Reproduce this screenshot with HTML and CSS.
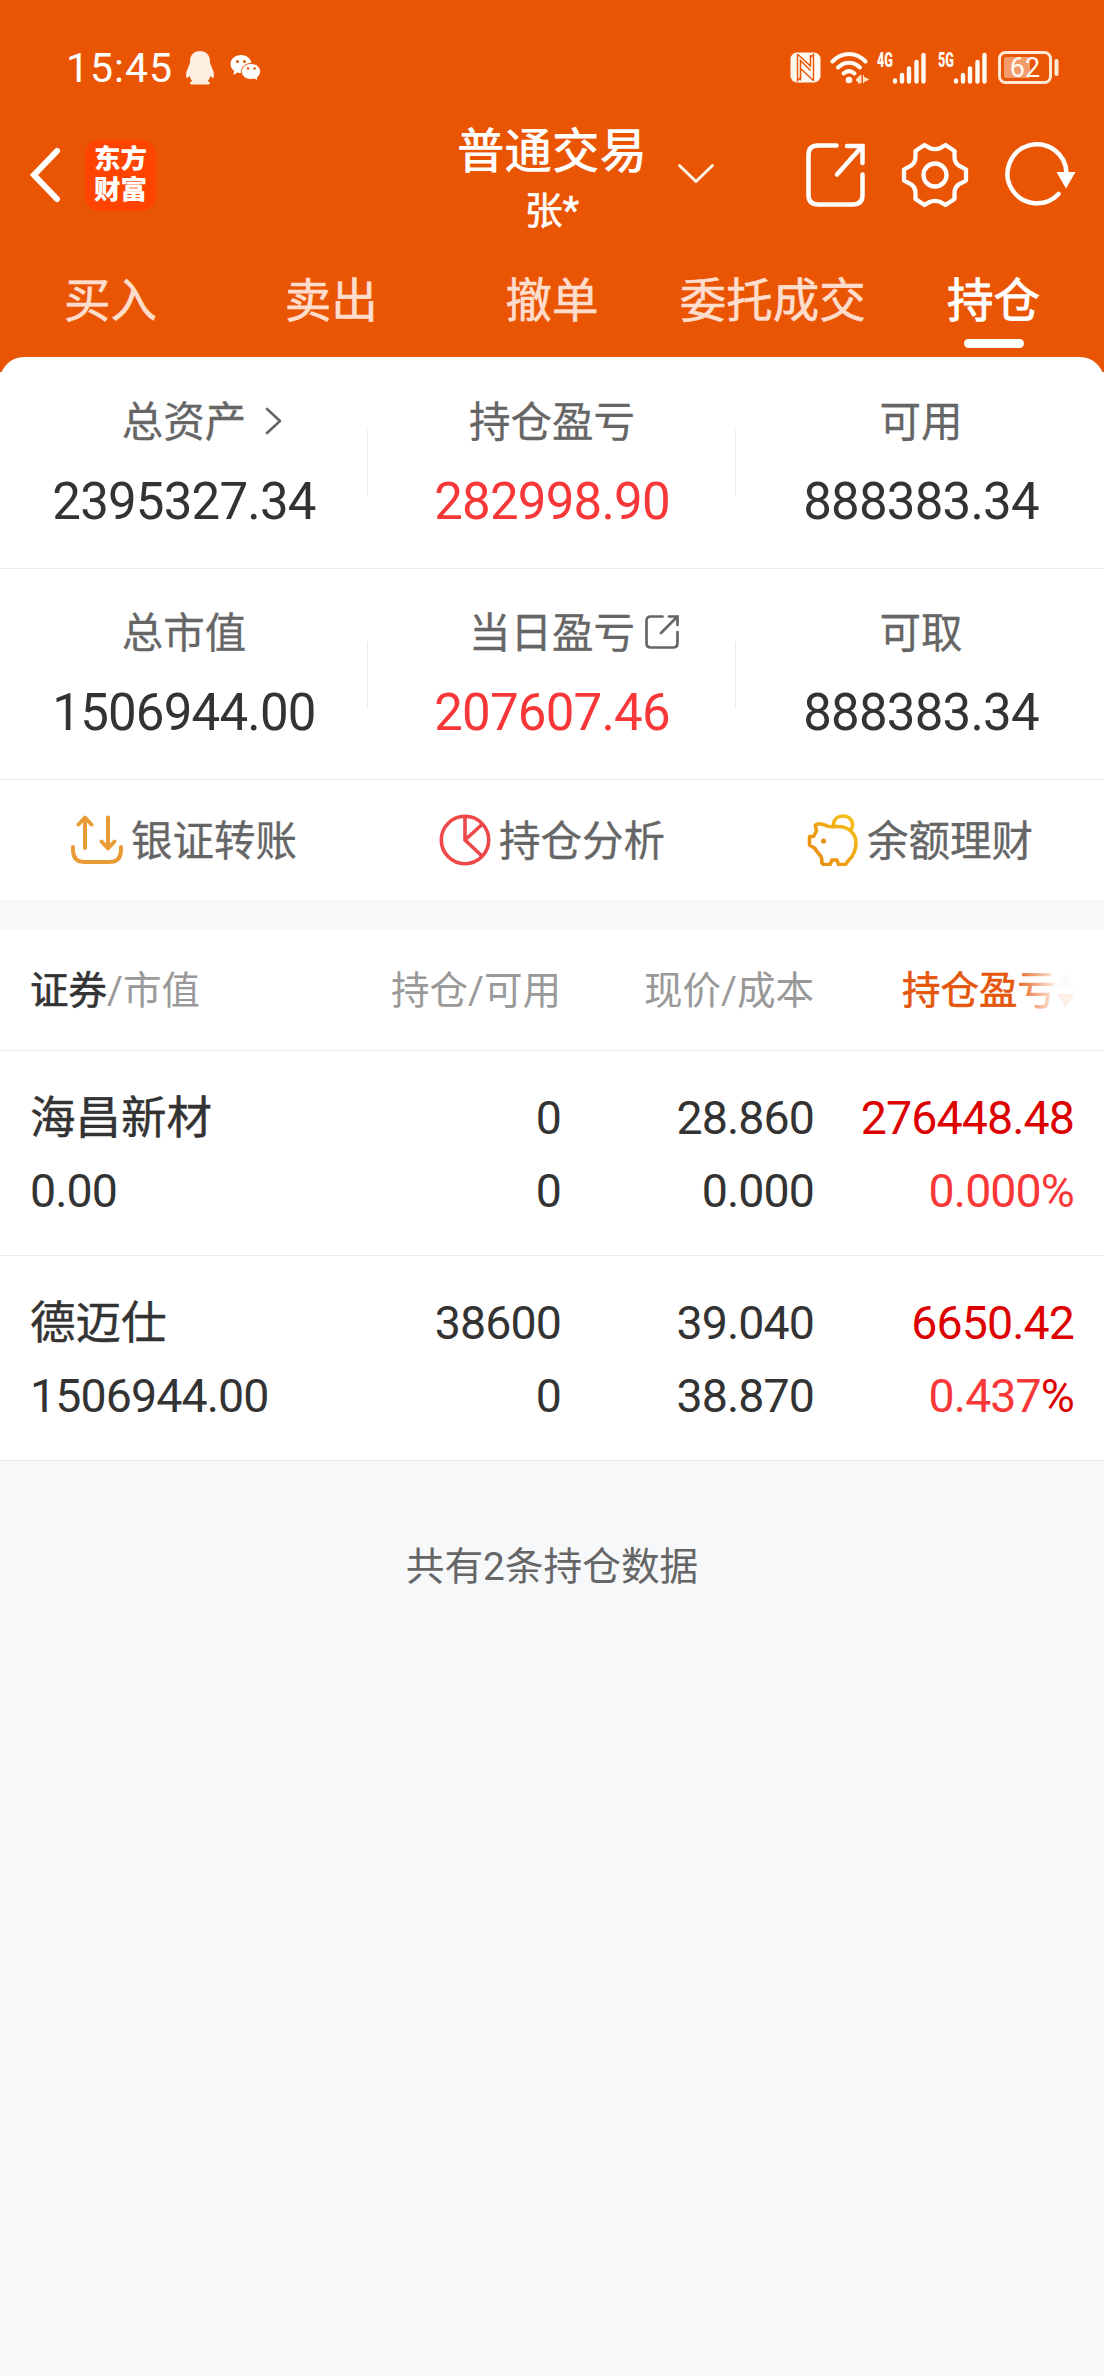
FILE: index.html
```html
<!DOCTYPE html>
<html lang="zh-CN">
<head>
  <meta charset="UTF-8">
  <meta name="viewport" content="width=device-width, initial-scale=1.0">
  <title>持仓 - 普通交易</title>
  <link rel="stylesheet" href="styles.css">
</head>
<body>
  <header class="header">
    <!-- 状态栏 -->
    <div class="status-bar">
      <span class="time">15:45</span>
      <svg class="icon-qq" width="30" height="34" viewBox="0 0 30 34">
        <path d="M15 0C8.500 0 5 4.500 5 10.500C5 14 1 19 1 24C1 28 3 27.500 4.500 24.500C5 27 6 28.800 7.500 30C4.500 31 4 33.500 7 33.500H23C26 33.500 25.500 31 22.500 30C24 28.800 25 27 25.500 24.500C27 27.500 29 28 29 24C29 19 25 14 25 10.500C25 4.500 21.500 0 15 0Z" fill="#fdeee2"/>
      </svg>
      <svg class="icon-wechat" width="31" height="28" viewBox="0 0 31 28">
        <path d="M11 1C5 1 .5 5 .5 10C.5 13 2 15.300 4.200 17L3.300 21L7.500 18.500C8.700 18.900 10 19 11 19C17 19 21.500 15 21.500 10S17 1 11 1Z" fill="#fff"/>
        <path d="M21 9.500C15.500 9.500 11.500 13 11.500 17.500S15.500 25.500 21 25.500C22.200 25.500 23.200 25.300 24.300 25L28 27L27.200 23.600C29.200 22.200 30.500 20 30.500 17.500C30.500 13 26.500 9.500 21 9.500Z" fill="#fff" stroke="#ea5504"/>
        <g fill="#ea5504"><circle cx="7.500" cy="7.500" r="1.500"/><circle cx="14.500" cy="7.500" r="1.500"/><circle cx="18" cy="14.500" r="1.300"/><circle cx="24.500" cy="14.500" r="1.300"/></g>
      </svg>
      <div class="status-right">
        <svg width="31" height="31" viewBox="0 0 31 31">
          <rect x=".5" y=".5" width="30" height="30" rx="6.500" fill="#fffaf3"/>
          <path d="M7.500 2V28.500L11 25M23.500 29V2.500L20 6" fill="none" stroke="#ea5504" stroke-width="1.400"/>
          <path d="M8 2.500L20.500 14V3M10.500 28.500V8.500L20.500 18.500M10.500 16.500L23.500 28.500" fill="none" stroke="#ea5504" stroke-width="1.500"/>
        </svg>
        <svg class="icon-wifi" width="40" height="32" viewBox="0 0 40 32">
          <g fill="none" stroke="#fffaf3" stroke-width="4" stroke-linecap="round">
            <path d="M2.500 9.500C12 -.500 26 -.500 35.500 9.500"/>
            <path d="M8 15.500C14.500 9 23.500 9 30 15.500"/>
            <path d="M13.500 21.500C17 18.500 21 18.500 24.500 21.500"/>
          </g>
          <circle cx="19" cy="28" r="3.300" fill="#fffaf3"/>
          <path d="M31 23V31H28.500V29H26.500V27ZM33.500 23V31M33.500 25L38.500 27.500L34.500 29.500Z" fill="#ffe3c8" stroke="#ffe3c8"/>
        </svg>
        <svg class="icon-signal" width="50" height="38" viewBox="0 -3 50 38">
          <text class="net-text" x="1" y="14.500" textLength="16" lengthAdjust="spacingAndGlyphs">4G</text>
          <path d="M19 28.500V29.500M26 23V29.500M33 16.500V29.500M40.500 10V29.500M47.500 3V29.500" stroke="#fffaf3" stroke-width="4.400" stroke-linecap="round"/>
        </svg>
        <svg class="icon-signal" width="50" height="38" viewBox="0 -3 50 38">
          <text class="net-text" x="1" y="14.500" textLength="16" lengthAdjust="spacingAndGlyphs">5G</text>
          <path d="M19 28.500V29.500M26 23V29.500M33 16.500V29.500M40.500 10V29.500M47.500 3V29.500" stroke="#fffaf3" stroke-width="4.400" stroke-linecap="round"/>
        </svg>
        <svg width="61" height="33" viewBox="0 0 61 33">
          <rect x="1.500" y="1.500" width="51" height="30" rx="6" fill="none" stroke="#ffe9d6" stroke-width="3"/>
          <rect x="6" y="6" width="26" height="21" rx="2" fill="#f49b6b"/>
          <path d="M58.500 10V23" stroke="#ffe9d6" stroke-width="4" stroke-linecap="round"/>
          <text class="battery-text" x="27" y="26.300">62</text>
        </svg>
      </div>
    </div>

    <!-- 标题栏 -->
    <div class="nav-bar">
      <div class="nav-left">
        <svg width="32" height="56" viewBox="0 0 32 56">
          <path d="M28 4L5 28L28 52" fill="none" stroke="#fff" stroke-width="6" stroke-linecap="round" stroke-linejoin="miter"/>
        </svg>
        <div class="logo"><span>东方</span><span>财富</span></div>
      </div>
      <div class="nav-title">
        <div class="title">普通交易</div>
        <div class="user">张*</div>
      </div>
      <svg class="title-arrow" width="38" height="22" viewBox="0 0 38 22">
        <path d="M2.500 2.500L19 18.500L35.500 2.500" fill="none" stroke="#fff6ea" stroke-width="3" stroke-linecap="round" stroke-linejoin="round"/>
      </svg>
      <div class="nav-right">
        <svg width="60" height="66" viewBox="0 0 60 66">
          <path d="M30.500 3.500H12Q2.500 3.500 2.500 13V53Q2.500 62.500 12 62.500H47Q56.500 62.500 56.500 53V32.500M41 4H56.500V21M56 4.500L31 32.500" fill="none" stroke="#fff" stroke-width="4.500" stroke-linecap="round"/>
        </svg>
        <svg width="68" height="66" viewBox="0 0 68 66">
          <path d="M23.500 3L28 5.700Q34 8.500 40 5.700L44.500 3L53.500 9V13.500C53 19 56 23.500 61.500 25.500L65 27.500V38.500L61.500 40.500C56 42.500 53 47 53.500 52.500V57L44.500 63L40 60.300Q34 57.500 28 60.300L23.500 63L14.500 57V52.500C15 47 12 42.500 6.500 40.500L3 38.500V27.500L6.500 25.500C12 23.500 15 19 14.500 13.500V9Z" fill="none" stroke="#fff" stroke-width="4.300" stroke-linejoin="round"/>
          <circle cx="34" cy="33" r="11.500" fill="none" stroke="#fff" stroke-width="4.300"/>
        </svg>
        <svg width="72" height="66" viewBox="0 0 72 66">
          <path d="M54.500 52A29.500 29.500 0 1 1 62.500 31.500" fill="none" stroke="#fff" stroke-width="4.500" stroke-linecap="round"/>
          <path d="M52.500 30H71.500L62 46.500Z" fill="#fff"/>
        </svg>
      </div>
    </div>

    <!-- 交易标签 -->
    <nav class="tabs">
      <a class="tab">买入</a>
      <a class="tab">卖出</a>
      <a class="tab">撤单</a>
      <a class="tab">委托成交</a>
      <a class="tab active">持仓</a>
    </nav>
  </header>

  <!-- 资产概览 -->
  <section class="summary">
    <div class="summary-row">
      <div class="cell">
        <div class="label">总资产
          <svg class="label-arrow" width="17" height="28" viewBox="0 0 17 28">
            <path d="M2 2L15 14L2 26" fill="none" stroke="#666" stroke-width="2.600" stroke-linecap="round" stroke-linejoin="round"/>
          </svg>
        </div>
        <div class="value">2395327.34</div>
      </div>
      <div class="cell">
        <div class="label">持仓盈亏</div>
        <div class="value up">282998.90</div>
      </div>
      <div class="cell">
        <div class="label">可用</div>
        <div class="value">888383.34</div>
      </div>
    </div>
    <div class="summary-row">
      <div class="cell">
        <div class="label">总市值</div>
        <div class="value">1506944.00</div>
      </div>
      <div class="cell">
        <div class="label">当日盈亏
          <svg class="label-share" width="34" height="34" viewBox="0 0 34 34">
            <path d="M17.500 1.500H6Q1.500 1.500 1.500 6V28Q1.500 32.500 6 32.500H28Q32.500 32.500 32.500 28V17M24 1.500H32.500V10M32 2L16 18" fill="none" stroke="#666" stroke-width="2.700" stroke-linecap="round"/>
          </svg>
        </div>
        <div class="value up">207607.46</div>
      </div>
      <div class="cell">
        <div class="label">可取</div>
        <div class="value">888383.34</div>
      </div>
    </div>
    <div class="actions">
      <div class="action">
        <svg width="52" height="52" viewBox="0 0 52 52">
          <path d="M2 33V36Q2 48 14 48H38Q50 48 50 36V33M14 34V4M7.500 10.500L14 3.500L20.500 10.500M37 3.500V34M30.500 27.500L37 34.500L43.500 27.500" fill="none" stroke="#e99c35" stroke-width="4" stroke-linecap="round" stroke-linejoin="round"/>
        </svg>
        <span>银证转账</span>
      </div>
      <div class="action">
        <svg width="52" height="52" viewBox="0 0 52 52">
          <g fill="none" stroke="#ee4849" stroke-width="3.600">
            <circle cx="26" cy="26" r="23.700"/>
            <path d="M26 2V26L43 42M26 26L43 10.500"/>
          </g>
        </svg>
        <span>持仓分析</span>
      </div>
      <div class="action">
        <svg width="52" height="52" viewBox="0 0 52 52">
          <defs>
            <linearGradient id="pig" x1="0" y1="1" x2="1" y2="0">
              <stop offset="0" stop-color="#e8860f"/>
              <stop offset="1" stop-color="#f6c319"/>
            </linearGradient>
          </defs>
          <path d="M19 11.500C13 9 7.500 9.500 8.500 12.500L9.500 17L6.500 22.500H2.500V31L8 34.500C10 39 14 41 14.500 43.500L15 49Q15.500 50.500 18 50.500H23L25 46H30L31.500 50.500H38.500L41.500 46.500C46 42 49 36 49 29C49 19 41 12.500 31 12.500C25 12.500 22 13.500 19 11.500ZM26.500 11C26.500 5 31 2 36 2C42 2 45.500 6 45.500 10.500Q45.500 13.500 44 16" fill="none" stroke="url(#pig)" stroke-width="3.600" stroke-linejoin="round"/>
          <circle cx="16.500" cy="27" r="2.600" fill="#e8901a"/>
        </svg>
        <span>余额理财</span>
      </div>
    </div>
  </section>

  <!-- 持仓列表 -->
  <section class="holdings">
    <div class="holdings-head">
      <div><span class="dark">证券</span>/市值</div>
      <div>持仓/可用</div>
      <div>现价/成本</div>
      <div class="sort">持仓盈亏
        <svg width="17" height="36" viewBox="0 0 17 36">
          <path d="M8.500 0L17 14H0Z" fill="#ccc"/>
          <path d="M0 21H17L8.500 35Z" fill="#ea5504"/>
        </svg>
      </div>
    </div>
    <div class="holding">
      <div class="name">海昌新材</div>
      <div>0</div>
      <div>28.860</div>
      <div class="profit">276448.48</div>
      <div>0.00</div>
      <div>0</div>
      <div>0.000</div>
      <div class="up">0.000%</div>
    </div>
    <div class="holding">
      <div class="name">德迈仕</div>
      <div>38600</div>
      <div>39.040</div>
      <div class="profit">6650.42</div>
      <div>1506944.00</div>
      <div>0</div>
      <div>38.870</div>
      <div class="up">0.437<span class="profit">%</span></div>
    </div>
  </section>

  <div class="footer-tip">共有2条持仓数据</div>
</body>
</html>
```

FILE: styles.css
```css
* {
  box-sizing: border-box;
}

body {
  margin: 0;
  min-height: 100vh;
  font-family: Roboto, "Noto Sans CJK SC", sans-serif;
  background: #f7f8fa;
  color: #333;
}

svg {
  display: block;
  flex-shrink: 0;
}

.header {
  height: 372px;
  background: #ea5504;
  color: #fff;
}

/* 状态栏 */
.status-bar {
  display: flex;
  align-items: center;
  height: 135px;
  padding: 0 45px 0 66px;
}

.time {
  font-size: 41px;
  letter-spacing: 1px;
}

.icon-qq {
  margin-left: 12px;
}

.icon-wechat {
  margin-left: 15px;
}

.status-right {
  display: flex;
  align-items: center;
  margin-left: auto;
}

.icon-wifi {
  margin-left: 9px;
}

.icon-signal {
  margin-left: 6px;
  margin-right: 5px;
}

.icon-signal + svg:last-child {
  margin-left: 6px;
}

.net-text {
  font-size: 19.5px;
  font-weight: 900;
  fill: #fffaf3;
}

.battery-text {
  font-size: 27px;
  fill: #fffaf3;
  text-anchor: middle;
}

/* 标题栏 */
.nav-bar {
  position: relative;
  display: flex;
  align-items: center;
  justify-content: space-between;
  height: 80px;
  padding: 0 28px 0 29px;
}

.nav-left {
  display: flex;
  align-items: center;
  gap: 24px;
}

.logo {
  display: flex;
  flex-direction: column;
  align-items: center;
  width: 71px;
  height: 71px;
  padding-top: 3px;
  border-radius: 15px;
  background: #ff4400;
  font-size: 26.5px;
  font-weight: 900;
  line-height: 31px;
}

.nav-title {
  position: absolute;
  left: 0;
  right: 0;
  top: -15px;
  text-align: center;
}

.title {
  font-size: 47.5px;
  font-weight: 500;
  line-height: 64px;
}

.user {
  font-size: 38px;
  line-height: 54px;
  -webkit-text-stroke: 0.6px;
}

.title-arrow {
  position: absolute;
  left: 677px;
  top: 28px;
}

.nav-right {
  display: flex;
  gap: 35px;
}

/* 标签 */
.tabs {
  display: flex;
  padding-top: 56px;
}

.tab {
  flex: 1;
  display: flex;
  flex-direction: column;
  align-items: center;
  font-size: 46.5px;
  line-height: 60px;
  color: #ffddcd;
  -webkit-text-stroke: 0.6px;
}

.tab.active {
  color: #fff;
  -webkit-text-stroke: 0.9px;
}

.tab.active::after {
  content: "";
  width: 60px;
  height: 9px;
  margin-top: 8px;
  border-radius: 5px;
  background: #fff;
}

/* 资产 */
.summary {
  position: relative;
  margin-top: -15px;
  border-radius: 24px 24px 0 0;
  background: #fff;
}

.summary-row {
  display: flex;
  height: 212px;
  border-bottom: 1px solid #ebebeb;
}

.summary-row + .summary-row {
  height: 211px;
}

.cell {
  position: relative;
  width: 368px;
  padding-top: 36px;
  text-align: center;
}

.cell:last-child {
  padding-left: 2px;
}

.summary-row + .summary-row .cell {
  padding-top: 35px;
}

.cell + .cell::before {
  content: "";
  position: absolute;
  left: -1px;
  top: 73px;
  width: 1px;
  height: 66px;
  background: #ebebeb;
}

.label {
  position: relative;
  width: max-content;
  margin: 0 auto;
  font-size: 41.5px;
  line-height: 60px;
  color: #666;
  -webkit-text-stroke: 0.3px;
}

.label-arrow {
  position: absolute;
  left: 100%;
  top: 14px;
  margin-left: 19px;
}

.label-share {
  position: absolute;
  left: 100%;
  top: 11px;
  margin-left: 10px;
}

.value {
  margin-top: 19px;
  font-size: 51px;
  line-height: 60px;
  letter-spacing: -0.8px;
}

.up {
  color: #f83838;
}

.actions {
  display: flex;
  height: 120px;
}

.action {
  flex: 1;
  display: flex;
  align-items: center;
  justify-content: center;
  gap: 8px;
  font-size: 41.5px;
  color: #666;
  -webkit-text-stroke: 0.3px;
}

.action span {
  padding-bottom: 5px;
}

/* 持仓 */
.holdings {
  margin-top: 30px;
  background: #fff;
}

.holdings-head,
.holding {
  display: grid;
  grid-template-columns: 310px 221px 253px 260px;
  padding: 0 30px;
  border-bottom: 1px solid #ebebeb;
  text-align: right;
}

.holdings-head {
  height: 121px;
  font-size: 38.5px;
  line-height: 121px;
  color: #999;
}

.holdings-head > :first-child,
.holding > :nth-child(4n + 1) {
  text-align: left;
}

.dark {
  color: #333;
  -webkit-text-stroke: 0.6px;
}

.sort {
  position: relative;
  display: flex;
  align-items: center;
  justify-content: flex-end;
  gap: 1px;
  color: #e5560c;
  -webkit-text-stroke: 0.6px;
}

/* 右侧渐隐遮罩 */
.sort::after {
  content: "";
  position: absolute;
  right: 0;
  top: 20px;
  width: 60px;
  height: 80px;
  background: linear-gradient(to right, rgba(255, 255, 255, 0), rgba(255, 255, 255, 0.9) 70%);
}

.holding {
  height: 205px;
  padding-top: 31px;
  grid-auto-rows: 73px;
  font-size: 46.5px;
  line-height: 73px;
  letter-spacing: -0.9px;
}

.name {
  font-size: 45.5px;
  letter-spacing: 0;
  -webkit-text-stroke: 0.4px;
}

.profit {
  color: #dd0000;
}

.footer-tip {
  padding-top: 76px;
  font-size: 38.7px;
  line-height: 60px;
  text-align: center;
  color: #666;
}
```
